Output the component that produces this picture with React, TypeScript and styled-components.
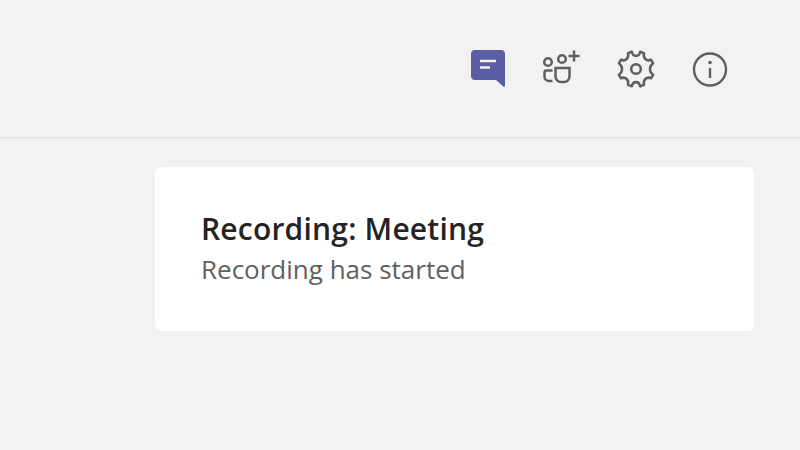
import { createGlobalStyle, styled } from "styled-components";

const GlobalStyle = createGlobalStyle`
  html, body {
    margin: 0;
    padding: 0;
    background-color: #f3f1f2;
    overflow: hidden;
  }
`;

const App = () => {
  return (
    <Page>
      <GlobalStyle />
      <Header>
        <IconSlot>
          <svg width="38" height="40" viewBox="0 0 38 40">
            <path
              d="M6 2h26a4 4 0 0 1 4 4v31.500c0 1.200-1.200 1.600-2 .8L27 32H6a4 4 0 0 1-4-4V6a4 4 0 0 1 4-4z"
              fill="#5b5ea6"
            />
            <path d="M11 13h16M11 19.500h10" stroke="#f3f1f2" strokeWidth="2.400" />
          </svg>
        </IconSlot>
        <IconSlot>
          <svg width="40" height="36" viewBox="0 0 40 36" fill="none" stroke="#5f5f5f" strokeWidth="2.500">
            <circle cx="6" cy="14" r="3.800" />
            <circle cx="20" cy="11" r="3.800" />
            <path d="M10.500 22.500H4.500a2 2 0 0 0-2 2v4a4.500 4.500 0 0 0 4.500 4.500h3.500" />
            <path d="M13.500 20h14v8.500a5.500 5.500 0 0 1-5.500 5.500h-3a5.500 5.500 0 0 1-5.500-5.500z" />
            <path d="M32 2.500v11M26.500 8h11" />
          </svg>
        </IconSlot>
        <IconSlot>
          <svg width="42" height="42" viewBox="0 0 40 40" fill="none" stroke="#5f5f5f" strokeWidth="2.400">
            <path
              d="M16 3.500c.6 2.700 2 4 4 4s3.400-1.300 4-4l3.600 1.400c-.6 2.600-.1 4.300 1.300 5.600 1.400 1.300 3.200 1.700 5.500.7l1.900 3.400c-2.100 1.500-3 3.300-3 5.400s.9 3.900 3 5.400l-1.900 3.400c-2.300-1-4.100-.6-5.500.7-1.400 1.300-1.900 3-1.300 5.600L24 36.500c-.6-2.700-2-4-4-4s-3.400 1.300-4 4l-3.600-1.400c.6-2.600.1-4.300-1.300-5.600-1.400-1.300-3.200-1.700-5.500-.7l-1.900-3.400c2.100-1.500 3-3.300 3-5.400s-.9-3.900-3-5.400l1.900-3.400c2.300 1 4.100.6 5.500-.7 1.400-1.300 1.900-3 1.300-5.600z"
              strokeLinejoin="round"
            />
            <circle cx="20" cy="20" r="4.600" />
          </svg>
        </IconSlot>
        <IconSlot>
          <svg width="38" height="43" viewBox="0 0 38 43" fill="none" stroke="#5f5f5f" strokeWidth="2.400">
            <circle cx="19" cy="21.500" r="16" />
            <path d="M19 20v10" />
            <circle cx="19" cy="14.500" r="1.800" fill="#5f5f5f" stroke="none" />
          </svg>
        </IconSlot>
      </Header>
      <Body>
        <Card>
          <Title>Recording: Meeting</Title>
          <Subtitle>Recording has started</Subtitle>
        </Card>
      </Body>
    </Page>
  );
};

export default App;

const Page = styled.div`
  width: 800px;
  height: 450px;
  display: flex;
  flex-direction: column;
  background-color: #f3f1f2;
  font-family: "Open Sans", "Noto Sans", sans-serif;
`;

const Header = styled.div`
  height: 139px;
  box-sizing: border-box;
  display: flex;
  justify-content: flex-end;
  gap: 36px;
  padding: 48px 71px 0 0;
  border-bottom: 2px solid #e7e5e6;
`;

const IconSlot = styled.div`
  width: 38px;
  height: 40px;
  display: flex;
  justify-content: center;

  svg {
    flex-shrink: 0;
  }
`;

const Body = styled.div`
  flex: 1;
  padding: 28px 46px 0 155px;
`;

const Card = styled.div`
  height: 164px;
  box-sizing: border-box;
  padding: 43px 46px;
  background-color: #ffffff;
  border-radius: 6px;
`;

const Title = styled.div`
  font-size: 30px;
  line-height: 38px;
  font-weight: 600;
  letter-spacing: 0.2px;
  color: #252424;
`;

const Subtitle = styled.div`
  font-size: 26px;
  line-height: 42px;
  color: #616161;
`;
